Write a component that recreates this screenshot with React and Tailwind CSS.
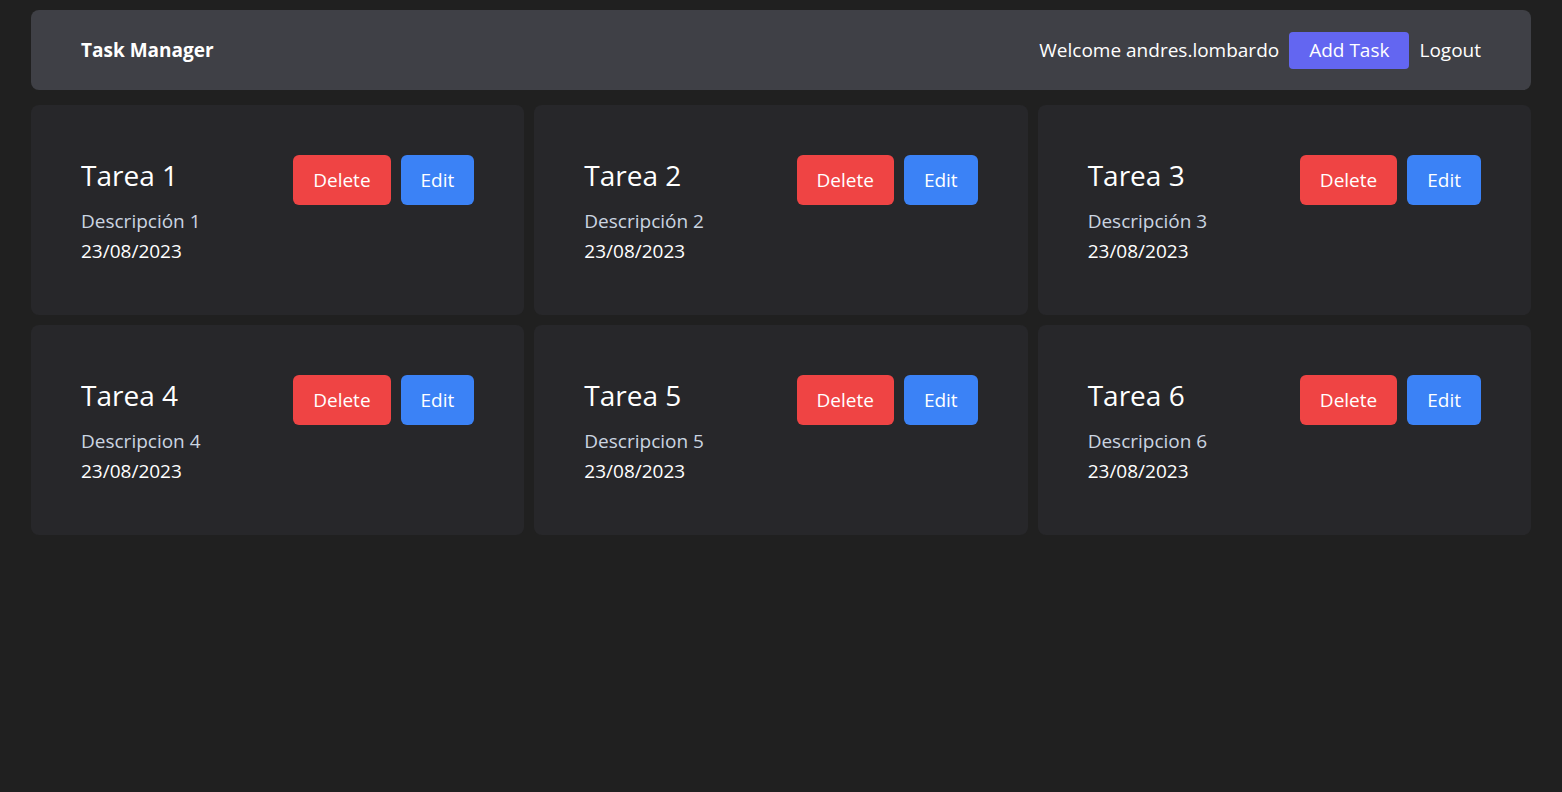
import React from 'react';

const tasks = [
  { id: 1, title: 'Tarea 1', description: 'Descripción 1', date: '23/08/2023' },
  { id: 2, title: 'Tarea 2', description: 'Descripción 2', date: '23/08/2023' },
  { id: 3, title: 'Tarea 3', description: 'Descripción 3', date: '23/08/2023' },
  { id: 4, title: 'Tarea 4', description: 'Descripcion 4', date: '23/08/2023' },
  { id: 5, title: 'Tarea 5', description: 'Descripcion 5', date: '23/08/2023' },
  { id: 6, title: 'Tarea 6', description: 'Descripcion 6', date: '23/08/2023' },
];

const TaskCard = ({ task }) => (
  <div className="bg-[#27272a] rounded-lg p-[50px] h-[210px] flex justify-between items-start">
    <div className="flex flex-col">
      <h2 className="text-[28px] leading-[40px] mb-[11px] text-white">{task.title}</h2>
      <p className="text-[19px] leading-[30px] text-[#cbd5e1]">{task.description}</p>
      <p className="text-[19px] leading-[30px] text-white">{task.date}</p>
    </div>
    <div className="flex gap-2.5">
      <button className="bg-[#ef4444] text-white text-[19px] leading-[26px] px-5 py-3 rounded-md">Delete</button>
      <button className="bg-[#3b82f6] text-white text-[19px] leading-[26px] px-5 py-3 rounded-md">Edit</button>
    </div>
  </div>
);

const App = () => {
  return (
    <div className="min-h-screen bg-[#202020] px-[31px] pt-[10px] font-['Open_Sans',sans-serif]">
      <header className="h-20 bg-[#3f4046] rounded-lg flex items-center justify-between px-[50px]">
        <h1 className="text-[19px] font-bold text-white">Task Manager</h1>
        <div className="flex items-center gap-2.5 text-[19px] text-white">
          <span>Welcome andres.lombardo</span>
          <button className="bg-[#6366f1] px-5 h-[37px] rounded-sm">Add Task</button>
          <button>Logout</button>
        </div>
      </header>

      <main className="grid grid-cols-3 gap-2.5 mt-[15px]">
        {tasks.map((task) => (
          <TaskCard key={task.id} task={task} />
        ))}
      </main>
    </div>
  );
};

export default App;
